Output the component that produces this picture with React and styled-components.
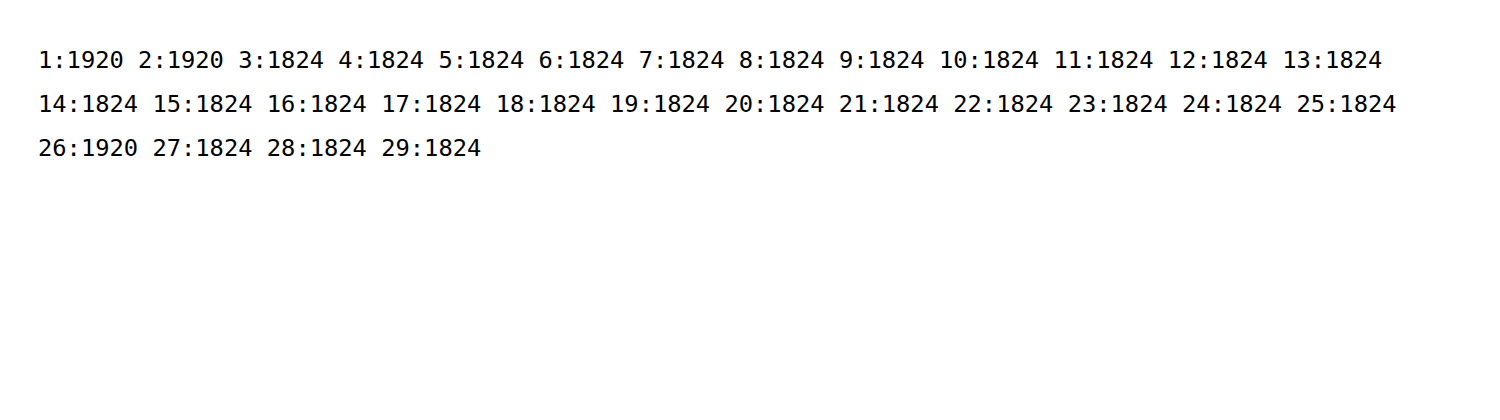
import React from "react";
import styled, { createGlobalStyle } from "styled-components";

const counts = [
  1920, 1920, 1824, 1824, 1824, 1824, 1824, 1824, 1824, 1824,
  1824, 1824, 1824, 1824, 1824, 1824, 1824, 1824, 1824, 1824,
  1824, 1824, 1824, 1824, 1824, 1920, 1824, 1824, 1824,
];

function App() {
  return (
    <>
      <GlobalStyle />
      <Output>
        {counts.map((value, i) => (
          <React.Fragment key={i}>
            <Entry>{`${i + 1}:${value}`}</Entry>
            {i < counts.length - 1 ? " " : null}
          </React.Fragment>
        ))}
      </Output>
    </>
  );
}

export default App;

const GlobalStyle = createGlobalStyle`
  body {
    margin: 0;
    background: #ffffff;
  }
`;

const Output = styled.div`
  box-sizing: border-box;
  width: 1500px;
  padding: 38px;
  font-family: "DejaVu Sans Mono", "Liberation Mono", monospace;
  font-size: 23.75px;
  line-height: 44px;
  color: #000000;
  white-space: normal;
`;

const Entry = styled.span`
  white-space: nowrap;
`;
